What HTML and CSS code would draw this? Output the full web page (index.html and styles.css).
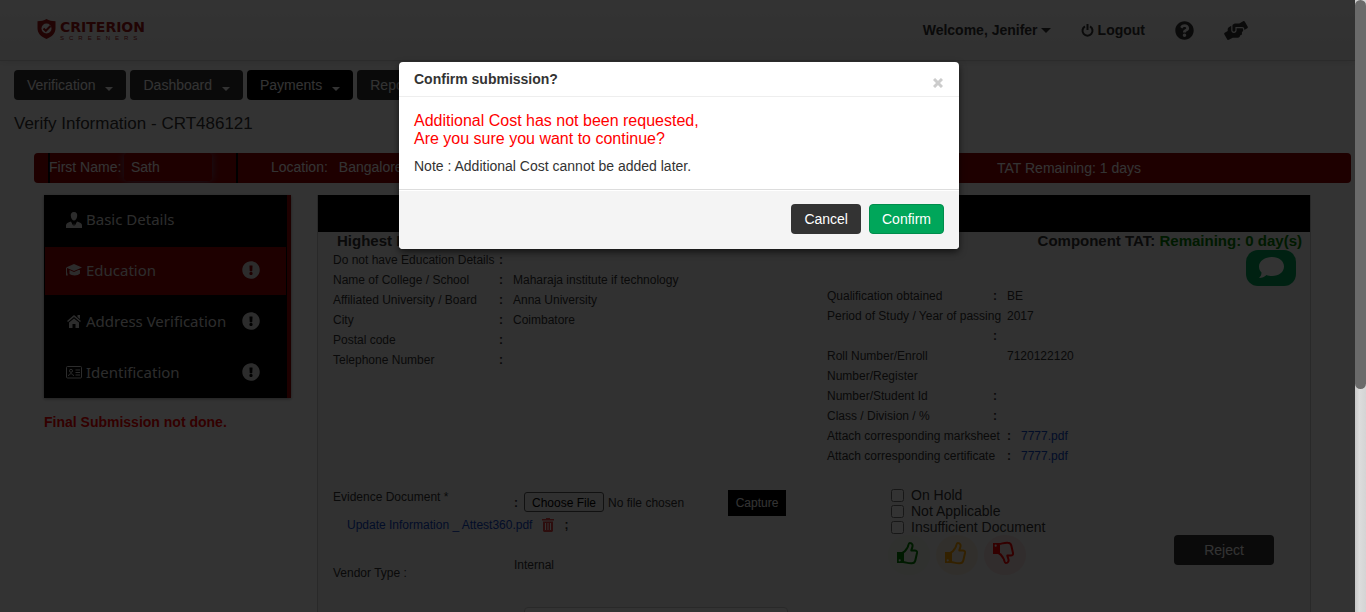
FILE: index.html
```html
<!DOCTYPE html>
<html lang="en">
<head>
<meta charset="utf-8">
<title>Verify Information</title>
<link rel="stylesheet" href="styles.css">
</head>
<body>
<svg class="defs" aria-hidden="true">
  <symbol id="alert" viewBox="0 0 512 512"><path d="M504 256c0 136.997-111.043 248-248 248S8 392.997 8 256C8 119.083 119.043 8 256 8s248 111.083 248 248zm-248 50c-25.405 0-46 20.595-46 46s20.595 46 46 46 46-20.595 46-46-20.595-46-46-46zm-43.673-165.346l7.418 136c.347 6.364 5.609 11.346 11.982 11.346h48.546c6.373 0 11.635-4.982 11.982-11.346l7.418-136c.375-6.874-5.098-12.654-11.982-12.654h-63.383c-6.884 0-12.356 5.780-11.981 12.654z"/></symbol>
  <symbol id="thumb" viewBox="0 0 22 24"><path d="M1 11h6v11H1z" fill="currentColor"/><circle cx="3.700" cy="19.300" r="1.100" fill="#eee"/><path d="M7 11.500c2.500-1 3-3 4.500-5 .8-1 .9-4.500 2.200-4.500 2.800 0 3.300 2.300 2.500 4.600-.4 1.300-.9 2.200-.9 2.900h3.500c1.500 0 2.500 1 2.200 2.500l-1.700 7.500c-.5 2-1.700 2.800-3.500 2.800-4 .3-6-1.300-8.800-1.300z" fill="none" stroke="currentColor" stroke-width="2" stroke-linejoin="round"/></symbol>
</svg>
<div class="window">
  <div class="page">
    <header class="topbar">
      <a class="logo" href="#">
        <svg width="19" height="20" viewBox="0 0 19 20"><path d="M9.500 0c2.500 1.500 5.500 2.200 9 2.300v7c0 5-3.500 8.500-9 10.700C4 17.800.5 14.300.5 9.300v-7C4 2.200 7 1.500 9.500 0z" fill="currentColor"/><circle cx="9.500" cy="9.500" r="5" fill="#fff"/><path d="M6.500 9.500l2.300 2.300 4.700-4.800" fill="none" stroke="currentColor" stroke-width="2"/></svg>
        <span class="logo-text"><b>CRITERION</b><small>SCREENERS</small></span>
      </a>
      <nav class="user">
        <a href="#">Welcome, Jenifer <i class="caret"></i></a>
        <a class="logout" href="#"><svg width="13" height="13" viewBox="0 0 13 13" fill="none" stroke="currentColor" stroke-width="2"><path d="M4 2.300a5 5 0 1 0 5 0M6.500 0v6"/></svg>Logout</a>
        <a class="help" href="#" aria-label="Help"><svg width="19" height="19" viewBox="0 0 512 512"><path fill="currentColor" d="M504 256c0 136.997-111.043 248-248 248S8 392.997 8 256C8 119.083 119.043 8 256 8s248 111.083 248 248zM262.655 90c-54.497 0-89.255 22.957-116.549 63.758-3.536 5.286-2.353 12.415 2.715 16.258l34.699 26.310c5.205 3.947 12.621 3.008 16.665-2.122 17.864-22.658 30.113-35.797 57.303-35.797 20.429 0 45.698 13.148 45.698 32.958 0 14.976-12.363 22.667-32.534 33.976C247.128 238.528 216 254.941 216 296v4c0 6.627 5.373 12 12 12h56c6.627 0 12-5.373 12-12v-1.333c0-28.462 83.186-29.647 83.186-106.667 0-58.002-60.165-102-116.531-102zM256 338c-25.365 0-46 20.635-46 46 0 25.364 20.635 46 46 46s46-20.636 46-46c0-25.365-20.635-46-46-46z"/></svg></a>
        <a class="help" href="#" aria-label="Support"><svg width="24" height="19" viewBox="0 0 640 512"><path fill="currentColor" d="M488 192H336v56c0 39.700-32.300 72-72 72s-72-32.300-72-72V126.400l-64.900 39C107.800 176.900 96 197.800 96 220.200v47.300l-80 46.200C.7 322.500-4.600 342.100 4.300 357.400l80 138.600c8.800 15.300 28.400 20.500 43.700 11.700L231.400 448H368c35.300 0 64-28.700 64-64h16c17.700 0 32-14.300 32-32v-64h8c13.300 0 24-10.700 24-24v-48c0-13.300-10.700-24-24-24zm147.700-37.400L555.700 16C546.900.7 527.300-4.500 512 4.300L408.600 64H306.400c-12 0-23.700 3.400-33.900 9.700L239 94.600c-9.400 5.800-15 16.100-15 27.100V248c0 22.100 17.900 40 40 40s40-17.900 40-40v-88h184c30.900 0 56 25.100 56 56v28.500l80-46.200c15.300-8.900 20.500-28.400 11.700-43.700z"/></svg></a>
      </nav>
    </header>

    <nav class="menu">
      <button class="menu-btn">Verification <i class="caret"></i></button>
      <button class="menu-btn">Dashboard <i class="caret"></i></button>
      <button class="menu-btn active">Payments <i class="caret"></i></button>
      <button class="menu-btn">Reports <i class="caret"></i></button>
    </nav>
    <h1 class="title">Verify Information - CRT486121</h1>

    <section class="summary">
      <div class="cell first"><label for="fname">First Name:</label><input id="fname" value="Sath"></div>
      <div class="cell place"><span>Location:</span><span>Bangalore</span></div>
      <div class="cell tat">TAT Remaining: 1 days</div>
    </section>

    <main class="main">
      <aside class="side">
        <nav class="tabs">
          <a class="tab" href="#"><svg width="16" height="17" viewBox="0 0 16 17"><path d="M8 1c2.500 0 3.500 2 3.200 4C11 7.500 9.500 9.500 8 9.500S5 7.500 4.800 5C4.500 3 5.500 1 8 1zM5 10.500L7.300 15l.7-3 .7 3L11 10.500c3 .8 5 1.700 5 4V17H0v-2.500c0-2.300 2-3.200 5-4z"/></svg>Basic Details</a>
          <a class="tab current" href="#"><svg width="16" height="14" viewBox="0 0 16 14"><path d="M8 1l8 3.500L8 8 0 4.500zM3.500 7L8 9l4.500-2H14v3.500C12 13 6 13 3.500 11zM0 5h1v4l.8 3.500H0z"/></svg>Education<svg class="badge" width="18" height="18"><use href="#alert"/></svg></a>
          <a class="tab" href="#"><svg width="16" height="14" viewBox="0 0 16 14"><path d="M8 1l7 6-1 1-6-5-6 5-1-1zM11.500 1H14v4l-2.500-2zM8 4.500l5 4V14H9.500v-4h-3v4H3V8.500z"/></svg>Address Verification<svg class="badge" width="18" height="18"><use href="#alert"/></svg></a>
          <a class="tab" href="#"><svg width="16" height="13" viewBox="0 0 16 13"><g fill="none" stroke="currentColor"><rect x=".5" y=".5" width="15" height="11.500" rx="1"/><circle cx="5" cy="4.800" r="1.500"/><path d="M2.500 10c.2-3 4.800-3 5 0M9.500 4H14M9.500 6.500H14M9.500 9H14"/></g></svg>Identification<svg class="badge" width="18" height="18"><use href="#alert"/></svg></a>
        </nav>
        <p class="notice">Final Submission not done.</p>
      </aside>

      <section class="panel">
        <div class="panel-head"></div>
        <div class="panel-title"><h2>Highest Education</h2><h2>Component TAT: <span class="green">Remaining: 0 day(s)</span></h2></div>
        <div class="details">
          <dl class="list">
            <div class="row"><dt>Do not have Education Details<b>:</b></dt><dd></dd></div>
            <div class="row"><dt>Name of College / School<b>:</b></dt><dd>Maharaja institute if technology</dd></div>
            <div class="row"><dt>Affiliated University / Board<b>:</b></dt><dd>Anna University</dd></div>
            <div class="row"><dt>City<b>:</b></dt><dd>Coimbatore</dd></div>
            <div class="row"><dt>Postal code<b>:</b></dt><dd></dd></div>
            <div class="row"><dt>Telephone Number<b>:</b></dt><dd></dd></div>
          </dl>
          <div class="right">
            <button class="chat" aria-label="Comments"><svg width="26" height="24" viewBox="0 0 26 24"><path d="M14 1c7 0 12 4 12 9.500S21 20 14 20c-2 0-4-.3-5.500-1-2 2-4.500 3-7.500 3 1.500-1.500 2.500-3 2.500-5.500C2 15 1 13 1 10.500 1 5 7 1 14 1z" fill="#fff"/></svg></button>
            <dl class="list">
              <div class="row"><dt>Qualification obtained<b>:</b></dt><dd>BE</dd></div>
              <div class="row"><dt>Period of Study / Year of passing<b>:</b></dt><dd>2017</dd></div>
              <div class="row"><dt><span class="narrow">Roll Number/Enroll Number/Register Number/Student Id</span><b>:</b></dt><dd>7120122120</dd></div>
              <div class="row"><dt>Class / Division / %<b>:</b></dt><dd></dd></div>
              <div class="row wide"><dt>Attach corresponding marksheet<b>:</b></dt><dd><a href="#">7777.pdf</a></dd></div>
              <div class="row wide"><dt>Attach corresponding certificate<b>:</b></dt><dd><a href="#">7777.pdf</a></dd></div>
            </dl>
          </div>
        </div>

        <div class="lower">
          <div class="form">
            <div class="field"><label class="name" for="doc">Evidence Document *</label><div class="upload"><b>:</b><input id="doc" type="file"><button class="capture">Capture</button></div></div>
            <div class="file"><a href="#">Update Information _ Attest360.pdf</a><button class="trash" aria-label="Delete file"><svg width="12" height="14" viewBox="0 0 12 14"><path d="M4 0h4v1h4v1.500H0V1h4zM1 3.500h10V13l-1 1H2l-1-1z" fill="#e04040"/><path d="M3.500 5v7M6 5v7M8.500 5v7" stroke="#fff"/></svg></button><b>;</b></div>
            <div class="field vendor"><label class="name" for="vendor">Vendor Type :</label><span>Internal</span></div>
            <input class="box" id="vendor">
          </div>
          <div class="status">
            <label><input type="checkbox">On Hold</label>
            <label><input type="checkbox">Not Applicable</label>
            <label><input type="checkbox">Insufficient Document</label>
            <div class="thumbs">
              <button class="thumb ok" aria-label="Positive"><svg width="22" height="24"><use href="#thumb"/></svg></button>
              <button class="thumb warn" aria-label="Amber"><svg width="22" height="24"><use href="#thumb"/></svg></button>
              <button class="thumb bad" aria-label="Negative"><svg width="22" height="24" viewBox="0 0 22 24"><g transform="matrix(1 0 0 -1 0 24)"><use href="#thumb" width="22" height="24"/></g></svg></button>
            </div>
          </div>
          <button class="reject">Reject</button>
        </div>
      </section>
    </main>
  </div>

  <div class="backdrop">
    <div class="modal" role="dialog" aria-labelledby="dlg">
      <div class="modal-head"><h3 id="dlg">Confirm submission?</h3><button class="close" aria-label="Close"><svg width="10" height="10" viewBox="0 0 10 10"><path d="M1 1l8 8M9 1L1 9" stroke="#ccc" stroke-width="3"/></svg></button></div>
      <div class="modal-body"><p class="warning">Additional Cost has not been requested,<br>Are you sure you want to continue?</p><p>Note : Additional Cost cannot be added later.</p></div>
      <div class="modal-foot"><button class="btn dark">Cancel</button><button class="btn go">Confirm</button></div>
    </div>
  </div>
  <div class="track"><div class="grip"></div></div>
</div>
</body>
</html>
```

FILE: styles.css
```css
* { box-sizing: border-box; }
body { margin: 0; overflow: hidden; font: 14px/20px "Liberation Sans", Arial, sans-serif; color: #333; }
h1, h2, h3, p, dl, dd { margin: 0; }
a { color: #0d47c8; text-decoration: none; }
button, input { font: inherit; margin: 0; }
button { border: 0; padding: 0; cursor: pointer; }
.defs { position: absolute; width: 0; height: 0; }
.window { position: relative; display: grid; grid-template-columns: 1fr 11px; height: 100vh; overflow: hidden; }
.page { min-width: 0; overflow: hidden; background: #fff; }

.topbar { display: flex; justify-content: space-between; align-items: center; height: 61px; padding: 0 107px 0 37px; border-bottom: 1px solid #d4d4d4; background: linear-gradient(#fff, #f2f2f2); box-shadow: 0 1px 8px rgba(0,0,0,.1); }
.logo { display: flex; gap: 4px; color: #a51414; }
.logo-text { display: flex; flex-direction: column; padding-top: 1px; }
.logo-text b { font: bold 14px/14px "DejaVu Sans", sans-serif; }
.logo-text small { font-size: 6px; line-height: 8px; letter-spacing: 5px; }
.user { display: flex; align-items: center; font-weight: bold; }
.user a { display: flex; align-items: center; color: #333; }
.caret { margin-left: 4px; border: 4px solid transparent; border-top-color: currentColor; border-bottom: 0; }
.user .caret { margin-left: 3px; border-width: 5px 5px 0; }
.logout { gap: 4px; margin-left: 30px; }
.help { margin-left: 30px; }

.menu { display: flex; gap: 4px; padding: 9px 14px 0; }
.menu-btn { display: flex; align-items: center; height: 30px; padding: 0 13px; border-radius: 4px; background: #333; color: #fff; }
.menu-btn .caret { margin: 8px 0 0 10px; }
.menu-btn.active { background: #000; }
.title { margin: 14px 14px 0; font-size: 17px; line-height: 20px; font-weight: normal; }

.summary { display: flex; height: 30px; margin: 19px 4px 0 34px; border-radius: 4px; background: #960000; color: #fff; overflow: hidden; }
.cell { display: flex; align-items: center; }
.first { width: 190px; margin-left: 14px; padding-bottom: 2px; border-left: 2px solid #000; border-right: 2px solid #000; }
.first label { width: 75px; margin-left: -1px; }
.first input { width: 88px; height: 28px; padding: 0 6px; border: 1px solid #900; border-radius: 4px; background: transparent; color: #fff; box-shadow: 0 0 8px rgba(82,168,236,.6); }
.place { gap: 11px; width: 740px; padding: 0 0 2px 33px; }
.tat { padding-left: 19px; }

.main { display: flex; gap: 26px; padding: 12px 44px 0; }
.side { flex: none; width: 247px; }
.tabs { display: grid; gap: 1px; border-right: 4px solid #960000; background: #000; box-shadow: 0 1px 3px rgba(0,0,0,.4); }
.tab { display: flex; align-items: center; gap: 4px; height: 50px; padding: 0 26px 2px 21px; border: 1px solid #000; color: #ddd; fill: currentColor; font: 15px/20px "Noto Sans", sans-serif; }
.current { background: #960000; }
.badge { margin-left: auto; }
.notice { margin-top: 14px; color: #f00; font-weight: bold; }

.panel { flex: 1; min-width: 0; min-height: 440px; border: 1px solid #ccc; border-top: 0; background: #f3f3f3; }
.panel-head { height: 37px; background: #000; }
.panel-title { display: flex; justify-content: space-between; padding: 0 8px 0 19px; }
.panel-title h2 { font-size: 15px; line-height: 18px; }
.green { color: #008000; }
.details { display: grid; grid-template-columns: 494px 1fr; padding-left: 15px; font-size: 12px; }
.right { display: flex; flex-direction: column; padding-right: 14px; }
.chat { align-self: flex-end; display: grid; place-items: center; width: 50px; height: 36px; border-radius: 12px; background: #00a65a; }
.row { display: flex; align-items: flex-start; }
.row dt { display: flex; flex-wrap: wrap; align-items: flex-end; flex: none; width: 180px; }
.row dt b { width: 14px; margin-left: auto; }
.wide dt { width: 194px; }
.narrow { width: 110px; }

.lower { display: grid; grid-template-columns: 558px 1fr auto; padding: 21px 36px 0 15px; font-size: 12px; }
.field { display: flex; }
.name { width: 181px; }
.upload { display: flex; align-items: center; padding-top: 3px; }
.upload b { width: 10px; }
.upload input { width: 204px; height: 22px; }
.upload input::file-selector-button { height: 20px; margin-right: 4px; padding: 0 7px; border: 1px solid #555; border-radius: 3px; background: #efefef; color: #000; font: inherit; }
.capture { width: 58px; height: 26px; background: #000; color: #fff; }
.file { display: flex; align-items: center; gap: 10px; height: 18px; padding-left: 14px; }
.trash { height: 14px; background: none; }
.vendor { padding-top: 21px; }
.vendor .name { padding-top: 8px; }
.box { width: 264px; height: 30px; margin: 24px 0 0 191px; border: 1px solid #ccc; border-radius: 4px; }
.status { display: flex; flex-direction: column; font-size: 14px; }
.status label { display: flex; align-items: center; gap: 7px; height: 16px; }
.status label input { width: 13px; height: 13px; }
.thumbs { display: flex; gap: 6px; margin-left: -3px; }
.thumb { width: 42px; height: 40px; padding: 0 4px 0 0; border-radius: 50%; }
.ok { background: #edf4e8; color: #008000; }
.warn { background: #f5ecdc; color: #ffa500; }
.bad { background: #f5dede; color: #f00; }
.reject { width: 100px; height: 30px; margin-top: 48px; border-radius: 4px; background: #333; color: #fff; font-size: 14px; }

.backdrop { position: absolute; inset: 0 11px 0 0; display: flex; justify-content: center; align-items: flex-start; padding: 62px 0 0 3px; background: rgba(0,0,0,.8); }
.modal { width: 560px; border-radius: 4px; background: #fff; box-shadow: 0 3px 7px rgba(0,0,0,.6); overflow: hidden; }
.modal-head { display: flex; justify-content: space-between; padding: 7px 16px 7px 15px; border-bottom: 1px solid #eee; }
.modal-head h3 { font-size: 14px; line-height: 20px; }
.close { display: grid; place-items: center; padding-top: 8px; background: none; }
.modal-body { padding: 15px 15px 13px; }
.warning { margin-bottom: 8px; color: #f00; font-size: 16px; line-height: 18px; }
.modal-foot { display: flex; justify-content: flex-end; gap: 8px; padding: 14px 15px 15px; border-top: 1px solid #ddd; background: #f4f4f4; box-shadow: inset 0 1px 0 #fff; }
.btn { height: 30px; padding: 0 13px; border-radius: 4px; color: #fff; }
.dark { background: #333; }
.go { padding: 0 12px; border: 1px solid #008d4c; background: #00a65a; }
.track { background: linear-gradient(90deg, #c8c8c8, #dcdcdc 40%, #d4d4d4); }
.grip { height: 389px; border-radius: 6px; background: #6a6a6a; }
```
